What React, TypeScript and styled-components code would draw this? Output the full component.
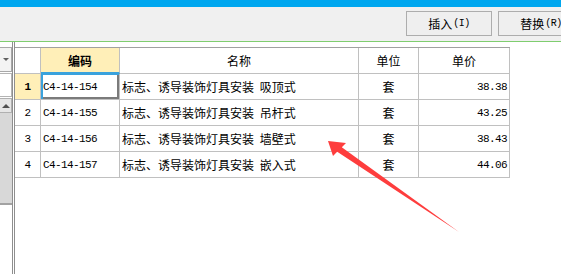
import React from 'react';
import styled, { createGlobalStyle } from 'styled-components';

const GlobalStyle = createGlobalStyle`
  html, body {
    margin: 0;
    padding: 0;
    background: #ffffff;
  }
  body {
    width: 561px;
    height: 274px;
    overflow: hidden;
    font-family: 'Noto Sans CJK SC', 'Liberation Sans', sans-serif;
    font-size: 12px;
    color: #000;
  }
`;

const Page = styled.div`
  position: relative;
  width: 561px;
  height: 274px;
  display: flex;
  flex-direction: column;
  overflow: hidden;
`;

const TitleStrip = styled.div`
  height: 7px;
  background: #00a7ef;
`;

const Toolbar = styled.div`
  height: 30px;
  background: #f0f0f0;
  border-bottom: 1px solid #7fcd6f;
  display: flex;
  align-items: flex-start;
  gap: 6px;
  padding: 4px 0 0 406px;
  box-sizing: content-box;
  overflow: hidden;
`;

const ToolButton = styled.button`
  flex: 0 0 86px;
  height: 25px;
  box-sizing: border-box;
  border: 1px solid #adadad;
  background: #efefef;
  font-family: 'Noto Sans CJK SC', sans-serif;
  font-size: 12px;
  color: #000;
  padding: 0;
  display: flex;
  align-items: center;
  justify-content: center;
  line-height: 1;
`;

const Hotkey = styled.span`
  font-family: 'Liberation Mono', monospace;
  font-size: 10px;
  letter-spacing: -0.5px;
  margin-left: 1px;
`;

const Main = styled.div`
  flex: 1;
  display: flex;
  padding-top: 5px;
`;

const SidePanel = styled.div`
  width: 12px;
  margin-top: -5px;
  padding-top: 5px;
  border-right: 1px solid #8e8e8e;
  display: flex;
  flex-direction: column;
`;

const Combo = styled.div`
  height: 25px;
  box-sizing: border-box;
  border: 1px solid #a8a8a8;
  border-left: none;
  background: #f3f3f3;
  display: flex;
  align-items: center;
  padding-left: 3px;
`;

const ComboArrow = styled.div`
  width: 0;
  height: 0;
  border-left: 3px solid transparent;
  border-right: 3px solid transparent;
  border-top: 3px solid #606060;
`;

const Field = styled.div`
  height: 24px;
  margin-top: 1px;
  box-sizing: border-box;
  border: 1px solid #b4b4b4;
  border-left: none;
  background: #fff;
`;

const ScrollTrack = styled.div`
  height: 105px;
  margin-top: 1px;
  background: #d8d8d8;
  border-bottom: 2px solid #a2a2a2;
`;

const ScrollButton = styled.div`
  height: 15px;
  box-sizing: border-box;
  border: 1px solid #b0b0b0;
  border-left: none;
  background: #e6e6e6;
  display: flex;
  align-items: center;
  padding-left: 2px;
`;

const UpArrow = styled.div`
  width: 0;
  height: 0;
  border-left: 4px solid transparent;
  border-right: 4px solid transparent;
  border-bottom: 4px solid #505050;
`;

const GridArea = styled.div`
  flex: 1;
  margin-left: 1px;
  margin-top: -5px;
  padding-top: 5px;
  border-left: 1px solid #8e8e8e;
  background: #fff;
`;

const Grid = styled.div`
  display: grid;
  grid-template-columns: 26px 79px 239px 60px 91px;
  grid-auto-rows: 26px;
  width: max-content;
  border-top: 1px solid #a0a0a0;
`;

const Cell = styled.div<{ $align?: 'left' | 'center' | 'right'; $mono?: boolean; $bold?: boolean; $hilite?: boolean; $focus?: boolean; $headMark?: boolean }>`
  box-sizing: border-box;
  border-right: 1px solid #c0c0c0;
  border-bottom: ${(p) => (p.$headMark ? '2px solid #3aa2dc' : '1px solid #c0c0c0')};
  background: ${(p) => (p.$hilite ? '#ffefb8' : '#fff')};
  display: flex;
  align-items: center;
  justify-content: ${(p) => (p.$align === 'right' ? 'flex-end' : p.$align === 'center' ? 'center' : 'flex-start')};
  padding: 0 ${(p) => (p.$align === 'right' ? '2px' : '0')} 0 ${(p) => (p.$align === 'left' ? '2px' : '0')};
  font-family: ${(p) => (p.$mono ? "'Liberation Mono', monospace" : "'Noto Sans CJK SC', sans-serif")};
  font-size: ${(p) => (p.$mono ? '11px' : '12px')};
  letter-spacing: ${(p) => (p.$mono ? '-0.6px' : '0')};
  font-weight: ${(p) => (p.$bold ? 700 : 400)};
  word-spacing: 3px;
  white-space: pre;
  box-shadow: ${(p) => (p.$focus ? 'inset 2px 1px 0 #3aa2dc, inset -2px -2px 0 #7b7b7b' : 'none')};
`;

const Pointer = styled.svg`
  position: absolute;
  left: 0;
  top: 0;
  pointer-events: none;
`;

const rows = [
  { code: 'C4-14-154', name: '标志、诱导装饰灯具安装 吸顶式', unit: '套', price: '38.38' },
  { code: 'C4-14-155', name: '标志、诱导装饰灯具安装 吊杆式', unit: '套', price: '43.25' },
  { code: 'C4-14-156', name: '标志、诱导装饰灯具安装 墙壁式', unit: '套', price: '38.43' },
  { code: 'C4-14-157', name: '标志、诱导装饰灯具安装 嵌入式', unit: '套', price: '44.06' },
];

const App = () => {
  return (
    <Page>
      <GlobalStyle />
      <TitleStrip />
      <Toolbar>
        <ToolButton>
          插入<Hotkey>(I)</Hotkey>
        </ToolButton>
        <ToolButton>
          替换<Hotkey>(R)</Hotkey>
        </ToolButton>
      </Toolbar>
      <Main>
        <SidePanel>
          <Combo>
            <ComboArrow />
          </Combo>
          <Field />
          <ScrollTrack>
            <ScrollButton>
              <UpArrow />
            </ScrollButton>
          </ScrollTrack>
        </SidePanel>
        <GridArea>
          <Grid>
            <Cell />
            <Cell $align="center" $bold $hilite $headMark>
              编码
            </Cell>
            <Cell $align="center">名称</Cell>
            <Cell $align="center">单位</Cell>
            <Cell $align="center">单价</Cell>
            {rows.map((r, i) => (
              <React.Fragment key={r.code}>
                <Cell $align="center" $mono $bold={i === 0} $hilite={i === 0}>
                  {i + 1}
                </Cell>
                <Cell $align="left" $mono $focus={i === 0}>
                  {r.code}
                </Cell>
                <Cell $align="left">{r.name}</Cell>
                <Cell $align="center">{r.unit}</Cell>
                <Cell $align="right" $mono>
                  {r.price}
                </Cell>
              </React.Fragment>
            ))}
          </Grid>
        </GridArea>
      </Main>
      <Pointer width="561" height="274" viewBox="0 0 561 274">
        <polygon
          points="328,141 346,143 341.8,147.2 459,232 337.2,151.8 333,156"
          fill="#fe3d3d"
        />
      </Pointer>
    </Page>
  );
};

export default App;
